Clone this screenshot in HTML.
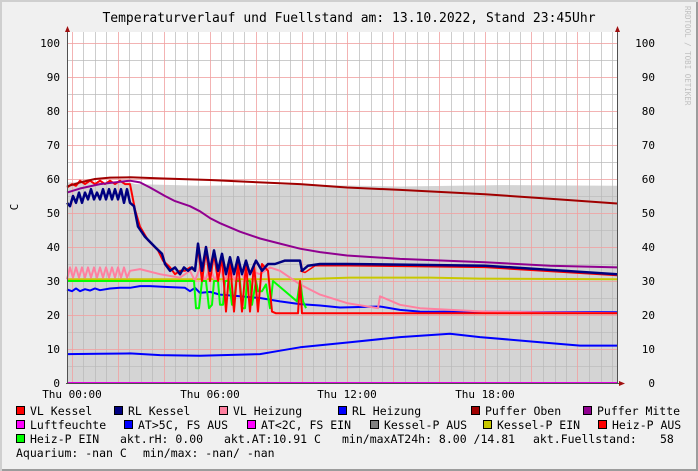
<!DOCTYPE html>
<html><head><meta charset="utf-8"><style>
body{margin:0;background:#f0f0f0;}
svg{display:block;font-family:"DejaVu Sans Mono","Liberation Mono",monospace;}
</style></head><body>
<svg width="698" height="471" viewBox="0 0 698 471" xmlns="http://www.w3.org/2000/svg">
<rect x="0" y="0" width="698" height="471" fill="#f0f0f0"/>
<rect x="696" y="0" width="2" height="471" fill="#9c9c9c"/>
<rect x="0" y="469" width="698" height="2" fill="#9c9c9c"/>
<rect x="0" y="0" width="698" height="2" fill="#cfcfcf"/>
<rect x="0" y="0" width="2" height="471" fill="#cfcfcf"/>
<text x="349" y="22" font-size="13" text-anchor="middle" fill="#000">Temperaturverlauf und Fuellstand am: 13.10.2022, Stand 23:45Uhr</text>
<text transform="translate(685,6) rotate(90)" font-size="7.5" fill="#c0c0c0">RRDTOOL / TOBI OETIKER</text>
<rect x="67" y="32" width="550" height="351" fill="#fff"/>
<g transform="translate(0,383) scale(1,-3.4)">
<polygon fill="#d4d4d4" points="67,0 67,59 130,59 135,58.5 200,58 300,58.3 400,57.8 500,58.2 617,58 617,0"/>
</g>
<g stroke="#c0c0c0" stroke-width="1" shape-rendering="crispEdges" opacity="0.8">
<path d="M67,366.5H617M67,332.5H617M67,298.5H617M67,264.5H617M67,230.5H617M67,196.5H617M67,162.5H617M67,128.5H617M67,94.5H617M67,60.5H617"/>
</g>
<path stroke="#b8b8b8" stroke-opacity="0.7" shape-rendering="crispEdges" d="M83.5,32V383M95.5,32V383M106.5,32V383M129.5,32V383M141.5,32V383M152.5,32V383M175.5,32V383M187.5,32V383M198.5,32V383M221.5,32V383M233.5,32V383M244.5,32V383M267.5,32V383M279.5,32V383M290.5,32V383M313.5,32V383M325.5,32V383M336.5,32V383M359.5,32V383M371.5,32V383M382.5,32V383M405.5,32V383M417.5,32V383M428.5,32V383M451.5,32V383M463.5,32V383M474.5,32V383M497.5,32V383M509.5,32V383M520.5,32V383M543.5,32V383M555.5,32V383M566.5,32V383M589.5,32V383M601.5,32V383M612.5,32V383"/>
<path stroke="#f0a0a0" stroke-opacity="0.8" shape-rendering="crispEdges" d="M72.5,32V383M118.5,32V383M164.5,32V383M210.5,32V383M256.5,32V383M302.5,32V383M347.5,32V383M393.5,32V383M439.5,32V383M485.5,32V383M531.5,32V383M577.5,32V383"/>
<path stroke="#f0a0a0" stroke-opacity="0.8" shape-rendering="crispEdges" d="M67,349.5H617M67,315.5H617M67,281.5H617M67,247.5H617M67,213.5H617M67,179.5H617M67,145.5H617M67,111.5H617M67,77.5H617M67,43.5H617"/>
<g transform="translate(0,383) scale(1,-3.4)" fill="none" stroke-linejoin="round">
<polyline vector-effect="non-scaling-stroke" stroke="#c8c800" stroke-width="2" points="67,30.5 300,30.5 350,31 430,31 480,30.7 617,30.5"/>
<polyline vector-effect="non-scaling-stroke" stroke="#0000ff" stroke-width="2" points="67,8.5 100,8.6 130,8.7 160,8.2 200,8 260,8.5 280,9.5 300,10.5 350,12 400,13.5 450,14.5 480,13.5 540,12 580,11 617,11"/>
<polyline vector-effect="non-scaling-stroke" stroke="#0000ff" stroke-width="2" points="67,27.5 72,27 76,27.8 80,27 85,27.6 90,27.2 95,27.8 100,27.3 110,27.8 120,28 130,28 140,28.5 150,28.5 170,28.2 185,28 190,27 195,28 200,26.5 210,26.8 220,26 240,25.5 260,25 280,24 300,23.2 320,22.8 340,22.2 380,22.5 400,21.5 420,21 617,20.8"/>
<polyline vector-effect="non-scaling-stroke" stroke="#ff80a0" stroke-width="2" points="67,30.5 70,34 73,31 76,34 79,31 82,34 85,31 88,34 91,31 94,34 97,31 100,34 103,31 106,34 109,31 112,34 115,31 118,34 121,31 124,34 127,31 130,33 140,33.5 160,32 180,31 190,33 195,30 200,34 205,30 210,34 215,30 220,34 225,30 230,34 235,30 240,34 245,30 250,33 260,32 270,34 280,33 300,29 320,26 347,23.5 378,22 380,25.5 400,23 420,22 485,21 617,20.5"/>
<polyline vector-effect="non-scaling-stroke" stroke="#00ff00" stroke-width="2" points="67,30 190,30 194,30 196,22 199,22 202,30 206,30 209,22 212,23 214,30 218,30 220,23 223,23 225,30 229,30 232,23 234,23 236,30 240,30 242,22 245,22 247,30 250,30 252,23 256,30 258,27 262,27 266,29 270,22 273,30 297,24 300,30 303,24 306,22"/>
<polyline vector-effect="non-scaling-stroke" stroke="#ff0000" stroke-width="2" points="67,57.5 72,58.5 76,58 80,59.5 85,58.5 90,59.5 95,58.5 100,59.5 105,58.5 110,59.5 115,58.5 120,59.5 125,58.5 130,58.5 135,51 140,46 148,42 158,39 163,36 170,34 175,32 180,33 185,33 190,34 195,33 198,40 202,30 206,39 210,30 214,38 218,30 222,37 226,21 230,36 234,21 238,36 242,21 246,35 250,21 254,35 258,21 262,35 268,33 272,21 276,20.5 298,20.5 300,30 302,20.5 617,20.5"/>
<polyline vector-effect="non-scaling-stroke" stroke="#ff0000" stroke-width="1.5" points="300,33 305,32.5 315,34.5 347,34.5 485,34 617,31.6"/>
<polyline vector-effect="non-scaling-stroke" stroke="#000080" stroke-width="2.5" points="67,53 70,52 73,55 76,53 79,56 82,53 85,56 88,54 91,57 94,54 97,56 100,54 103,57 106,54 109,57 112,54 115,57 118,54 121,57 124,53 127,57 130,53 134,52 138,46 145,43 155,40 162,38 165,35 170,33 175,34 180,32 184,34 188,33 192,34 195,33 198,41 202,33 206,40 210,33 214,39 218,33 222,38 226,32 230,37 234,32 238,37 242,32 246,36 250,32 256,36 262,33 268,35 275,35 285,36 300,36 302,33 308,34.5 320,35 347,35 485,34.5 617,32"/>
<polyline vector-effect="non-scaling-stroke" stroke="#900090" stroke-width="2" points="67,56 80,57.2 100,58.5 115,59 130,59.5 140,59 150,57.5 165,55 175,53.5 190,52 200,50.5 210,48.5 220,47 240,44.5 260,42.5 280,41 300,39.5 320,38.5 347,37.5 400,36.5 485,35.5 550,34.5 617,34"/>
<polyline vector-effect="non-scaling-stroke" stroke="#a00000" stroke-width="2" points="67,57.8 80,59 95,60 110,60.4 130,60.5 160,60.2 210,59.7 260,59 300,58.5 347,57.5 400,56.8 485,55.5 550,54.2 617,52.8"/>
</g>
<rect x="67" y="382" width="550" height="2" fill="#e000e0"/>
<path d="M67.5,30V384M66,383.5H620M617.5,32V384" stroke="#505050" stroke-width="1" shape-rendering="crispEdges"/>
<polygon points="67.5,26 65,32 70,32" fill="#a01010"/>
<polygon points="617.5,26 615,32 620,32" fill="#a01010"/>
<polygon points="625,383.5 619,381 619,386" fill="#a01010"/>
<g font-size="11" fill="#000" text-anchor="end">
<text x="60" y="387">0</text><text x="60" y="353">10</text><text x="60" y="319">20</text><text x="60" y="285">30</text><text x="60" y="251">40</text><text x="60" y="217">50</text><text x="60" y="183">60</text><text x="60" y="149">70</text><text x="60" y="115">80</text><text x="60" y="81">90</text><text x="60" y="47">100</text>
<text x="655" y="387">0</text><text x="655" y="353">10</text><text x="655" y="319">20</text><text x="655" y="285">30</text><text x="655" y="251">40</text><text x="655" y="217">50</text><text x="655" y="183">60</text><text x="655" y="149">70</text><text x="655" y="115">80</text><text x="655" y="81">90</text><text x="655" y="47">100</text>
</g>
<text transform="translate(18,207) rotate(-90)" font-size="11" text-anchor="middle">C</text>
<g font-size="11" text-anchor="middle">
<text x="72" y="398">Thu 00:00</text><text x="210" y="398">Thu 06:00</text><text x="347" y="398">Thu 12:00</text><text x="485" y="398">Thu 18:00</text>
</g>
<g stroke="#000" stroke-width="1" shape-rendering="crispEdges">
<rect x="16.5" y="406.5" width="8" height="8" fill="#ff0000"/>
<rect x="114.5" y="406.5" width="8" height="8" fill="#000080"/>
<rect x="219.5" y="406.5" width="8" height="8" fill="#ff80a0"/>
<rect x="338.5" y="406.5" width="8" height="8" fill="#0000ff"/>
<rect x="471.5" y="406.5" width="8" height="8" fill="#a00000"/>
<rect x="583.5" y="406.5" width="8" height="8" fill="#900090"/>
<rect x="16.5" y="420.5" width="8" height="8" fill="#ff00ff"/>
<rect x="124.5" y="420.5" width="8" height="8" fill="#0000ff"/>
<rect x="247.5" y="420.5" width="8" height="8" fill="#ff00ff"/>
<rect x="370.5" y="420.5" width="8" height="8" fill="#808080"/>
<rect x="483.5" y="420.5" width="8" height="8" fill="#c8c800"/>
<rect x="598.5" y="420.5" width="8" height="8" fill="#ff0000"/>
<rect x="16.5" y="434.5" width="8" height="8" fill="#00ff00"/>
</g>
<g font-size="11.5" fill="#000">
<text x="30" y="415">VL Kessel</text><text x="128" y="415">RL Kessel</text><text x="233" y="415">VL Heizung</text><text x="352" y="415">RL Heizung</text><text x="485" y="415">Puffer Oben</text><text x="597" y="415">Puffer Mitte</text>
<text x="30" y="429">Luftfeuchte</text><text x="138" y="429">AT&gt;5C, FS AUS</text><text x="261" y="429">AT&lt;2C, FS EIN</text><text x="384" y="429">Kessel-P AUS</text><text x="497" y="429">Kessel-P EIN</text><text x="612" y="429">Heiz-P AUS</text>
<text x="30" y="443">Heiz-P EIN</text><text x="120" y="443">akt.rH: 0.00</text><text x="224" y="443">akt.AT:10.91 C</text><text x="342" y="443">min/maxAT24h: 8.00 /14.81</text><text x="533" y="443">akt.Fuellstand:</text><text x="660" y="443">58</text>
<text x="16" y="457">Aquarium: -nan C</text><text x="143" y="457">min/max: -nan/ -nan</text>
</g>
</svg>
</body></html>
